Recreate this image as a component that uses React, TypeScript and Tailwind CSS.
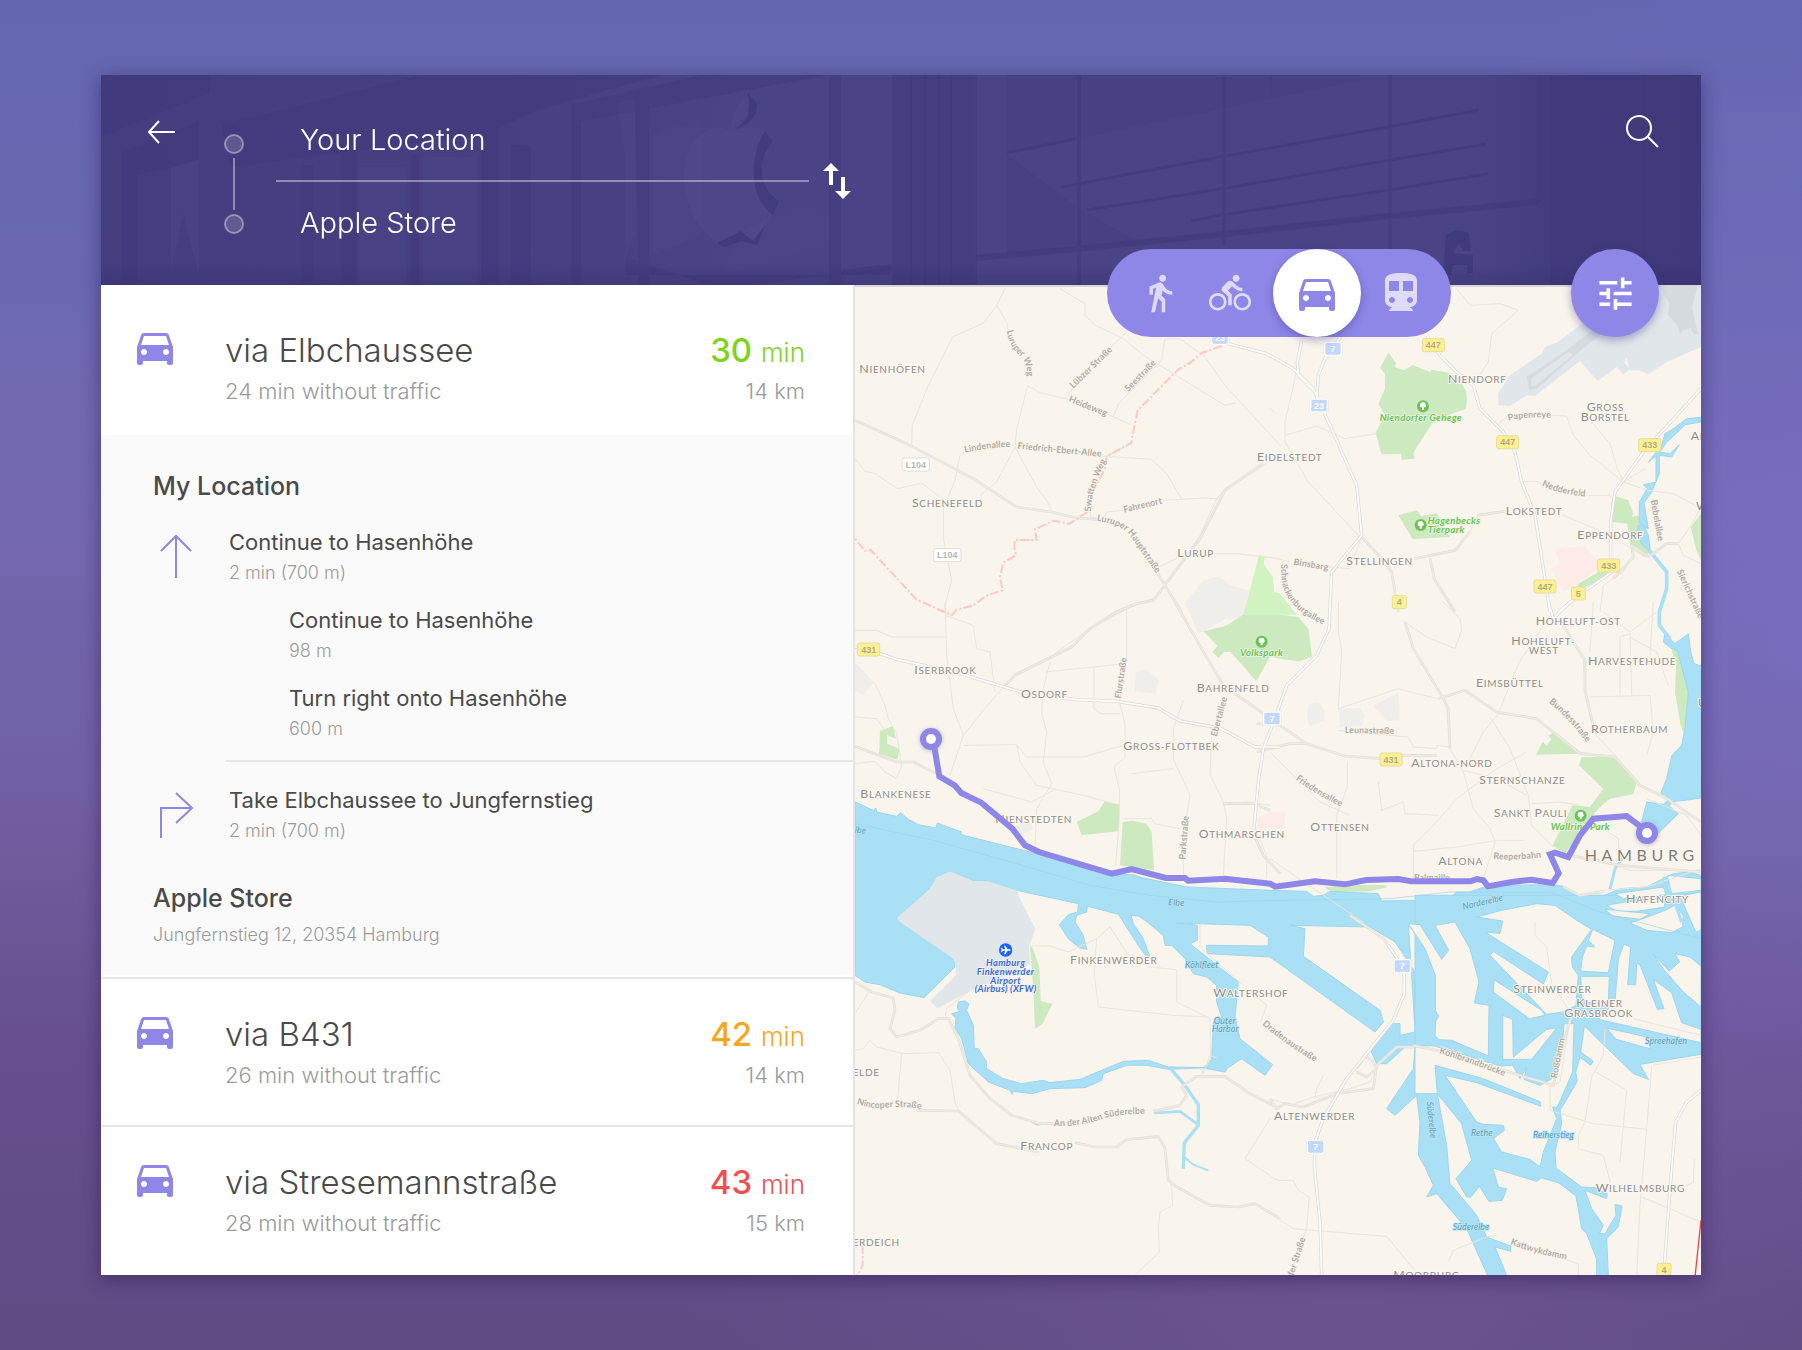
import { useState, type ReactNode } from "react";
import { MdDirectionsBike, MdDirectionsWalk, MdSwapVert, MdTune } from "react-icons/md";

/* ---------- Map data: six tiles on one canvas, three units per pixel ---------- */

type TileId = "a" | "b" | "c" | "d" | "e" | "f";
const tiles: Record<TileId, string> = {
  a: "translate(0 0)",
  b: "translate(1260 0)",
  c: "translate(0 960)",
  d: "translate(1260 960)",
  e: "translate(0 1920)",
  f: "translate(1260 1920)",
};
type Shape = [TileId, string];
type PathName = [TileId, string, string];
type Label = [TileId, number, number, string];

const parks: Shape[] = [
  ["a", "M1228 820L1245 824L1240 845L1268 885L1272 930L1290 935V990H1185Z"],
  ["b", "M355 212L378 243L374 255L402 265L428 250L480 270L485 263L535 272L560 285L588 325L591 352L588 380L545 395L490 420L440 495L430 515L434 530L394 533V515L334 517L317 452L345 400L325 365L345 320L345 275L330 258Z"],
  ["b", "M385 700L440 685L455 703L500 693L540 765L428 771Z"],
  ["b", "M1035 643L1075 655L1090 695L1085 705L1118 697L1105 735L1115 760L1140 810L1125 825L1080 790L1072 725L1027 720L1024 665Z"],
  ["b", "M920 908L985 870L1020 860L1010 885L935 920Z"],
  ["b", "M1293 695L1262 735L1278 800L1293 838Z"],
  ["c", "M1060 88L1125 73L1180 38L1290 38L1345 45L1375 80L1386 165L1345 178L1300 172L1260 165L1219 238L1142 150H1122L1105 168L1087 150L1103 132Z"],
  ["c", "M90 388L128 372L138 410L110 398L112 425L150 442L142 473L87 455Z"],
  ["c", "M680 660L745 628L765 598L809 608L806 688L695 699Z"],
  ["c", "M818 660L848 656L890 665L905 690L912 805L810 790Z"],
  ["d", "M853 390L928 455L797 458L818 420L830 430L845 412L835 402Z"],
  ["d", "M935 465H1030L1100 540L1090 577L1020 590L995 610L960 650L885 755L848 730L908 610L960 615L1000 560L927 490Z"],
  ["d", "M168 855L280 848L350 850V856L300 868L200 870L168 862Z"],
  ["d", "M1205 145L1222 140L1255 270L1243 400L1232 370L1215 270L1218 185Z"],
  ["e", "M540 75L547 75L568 135L572 237L607 246L578 305L555 320L550 200Z"],
];
const brightParks: Shape[] = [
  ["a", "M1228 820L1245 824L1240 845L1268 885L1272 930L1290 935L1340 998H1180Z"],
];
const greys: Shape[] = [
  ["a", "M1060 895L1110 883L1140 910L1197 925L1182 1005L1130 1010L1045 1055L1005 962Z"],
  ["c", "M15 185L70 243L38 280L15 265Z"],
  ["c", "M858 210L885 200L926 230L918 275L853 268Z"],
  ["c", "M470 690L535 650L550 680L505 705Z"],
  ["d", "M115 310L140 300L163 325V355L120 372L110 345Z"],
  ["d", "M205 320L270 318L285 345L275 372L210 375Z"],
  ["d", "M310 312L385 270L389 355L350 357Z"],
];
const pinks: Shape[] = [
  ["b", "M855 800L945 792L990 850L965 875L880 930L845 860L870 845Z"],
  ["d", "M0 630L45 632V680H-35L-42 650Z"],
];
const airfields: Shape[] = [
  ["b", "M1293 15V195L1190 240L1135 277L1105 265H1080L1070 228L1063 240L1080 262L1060 277L1040 255L983 297L930 237L795 342L770 340L720 372L686 370L684 335L720 280L815 215L825 195L865 180L935 125L1030 60L1130 15Z"],
];
const airstrips: Shape[] = [
  ["b", "M1170 15H1283L1266 75L1284 157L1270 155L1262 138L1240 145L1230 157L1222 130L1195 100L1198 65Z"],
  ["b", "M770 285L890 205L1010 110L1030 125L920 215L800 320L778 325ZM785 288L782 312L795 312L910 218L895 210Z"],
];

const water: Shape[] = [
  [
    "c",
    "M15 600L70 625L78 618L80 630L140 643L152 632L175 652L205 668L258 678L262 663L335 690L330 697L540 750L780 818L850 818L880 828L1010 855L1290 866L1370 868L1390 883L1420 880L1440 868L1585 875L1595 897L1770 893L1780 880L1805 882L1820 870L1860 870L1915 850L2105 848L2140 853L2185 880L2265 880L2310 860L2390 855L2470 815L2515 810L2553 820V1100H1760L1755 1120L1725 1040L1675 965L1695 1280L1695 1475L1762 1475L1790 1630L1800 1750L1805 1750L1880 1840L1910 1905L1982 1932V1948L1935 1935L1972 2025H1915L1850 1880L1760 1775L1730 1785L1750 1750L1725 1695L1705 1660L1710 1560L1700 1480L1635 1540L1610 1520L1690 1400L1695 1330L1665 1335L1610 1385L1580 1385L1560 1340L1625 1265H1650V1300L1695 1290L1695 1110L1635 1020L1560 975L1320 970L1365 980L1360 1063L1590 1225L1600 1260L1575 1290L1260 1065L1072 1055L1070 1030L1255 1032V1005L1200 970L980 963L1042 970V1015L1020 1025L1120 1105L1165 1140L1155 1245L1170 1310L1268 1388L1245 1420L1175 1370L1130 1400L1125 1410L1060 1398L1085 1370L1090 1260L1115 1245L1100 1200V1150L1070 1125L1030 1115L1005 1070L965 1030L945 1030L940 1000L885 955L865 942L843 940L850 965L880 1010L900 1065H890L865 1030L820 960L805 937L712 912L710 930L680 940L675 960L700 1000L710 1042L690 1038L655 1010L628 968L655 938L683 930L685 905L500 865L415 838L370 837L300 808L260 825L238 862L140 948L312 1070L315 1095L222 1187L150 1173L90 1148L45 1140L15 1120Z",
  ],
  [
    "f",
    "M435 -80H1293V397L1110 427L1135 472L1090 455L943 312L932 390L970 418L962 430L930 405L917 450L922 478L870 565L875 605L855 690L858 738L935 795L975 797L1012 815L1010 830L945 805L965 860L1000 910L988 935H1005L1038 880L1035 848L1056 852L1045 915L1010 950L1015 1065H980V1010L950 935L935 920L918 822L865 782L815 768L800 778L668 738L685 795L710 800L697 835L657 838L628 792L603 825H590L558 770L605 715L575 605L502 515L495 430L640 470L812 540V553L620 482L525 460L620 600L640 607L700 610L703 625L670 650L695 690L780 712L810 735L820 690L860 590L848 555L862 555L908 450L912 305H882L875 400L845 470L810 490L762 472L770 435L750 470L728 430L690 432L495 372L435 370Z",
  ],
  ["d", "M1255 95L1262 150L1272 185L1293 192V588L1245 595L1195 600L1173 572L1190 530L1205 462L1235 430L1245 380L1255 270L1222 145L1205 140L1180 120L1185 95L1215 125Z"],
  ["d", "M1130 600L1180 607L1195 595L1205 602L1197 612L1225 635L1150 708L1115 660Z"],
  ["b", "M1105 730L1120 725L1135 760L1142 812L1118 790L1103 762Z"],
  ["b", "M1293 406L1250 410L1210 440L1185 455L1175 490L1135 540L1158 522V600L1120 608L1132 620L1108 660V725L1135 740L1122 662L1145 630L1168 575V520L1205 525L1228 488L1200 515L1170 510L1190 480L1215 458L1245 428L1293 420Z"],
  ["e", "M325 240L345 237L357 245L350 265L370 310L373 380L385 380L410 420V440L460 470L515 485L580 475L600 482L690 472L820 418L895 415L955 435L1075 437L955 442L890 430L830 430L760 455L755 475L705 497L600 500L545 515L490 508L487 517L480 505L415 480L355 425L335 350L315 318L318 290L305 275L330 268L322 260Z"],
  ["e", "M545 600L558 600L572 608L560 609Z"],
];
const islands: Shape[] = [
  ["f", "M415 5L450 8L515 112L536 85L495 10L555 0L600 80L627 180L613 243L657 250L655 402L545 355L508 353L495 342L497 298L506 283L496 265V160L465 80Z"],
  ["f", "M620 -15L695 -35L800 -55L855 -50L920 -5L965 22L905 105L907 135L925 160L918 250L880 270L830 277L660 100L670 88L820 186L835 150L645 30L690 34L698 -3Z"],
  ["f", "M672 173L815 265L825 280L778 290L670 210Z"],
  ["f", "M698 280L728 292L730 405L830 322L860 318L785 412H698Z"],
  ["f", "M968 22L1035 55L1015 152L932 148L937 105L950 72L975 75L955 55Z"],
  ["f", "M932 163H1018L1015 238L950 242L935 225Z"],
  ["f", "M1062 66L1082 75L1073 188H1097L1100 122L1110 128L1162 262L1182 260L1150 172L1205 212L1235 302L1293 322V362L985 292L1035 238L1045 110Z"],
  ["f", "M1150 97L1198 147L1228 120L1215 95L1260 105L1293 133V255L1240 210L1175 135Z"],
  ["f", "M1010 318L1145 348L1140 380L1038 352Z"],
  ["f", "M1080 3L1125 -12L1185 -35L1215 -50L1240 -20L1238 15L1205 32L1130 25Z"],
  ["f", "M1010 -50L1065 -60L1180 -70L1185 -45L1100 -32H1040Z"],
  ["f", "M1005 -38L1140 -25L1110 -8L1028 -18Z"],
  ["f", "M1192 -140L1293 -130V-95L1205 -85Z"],
  ["f", "M1230 -78L1293 -90V25L1278 30L1255 -20Z"],
  ["f", "M1035 -85L1180 -105L1188 -82L1060 -70Z"],
];
const rivers: [TileId, string, number][] = [
  ["b", "M1138 805L1190 870V920L1168 990L1168 1030L1200 1070", 11],
  ["d", "M1060 765L1035 800L1020 862", 9],
  ["d", "M1180 825L1210 890L1235 960", 9],
  ["e", "M962 440L1003 488L1045 548V610L1003 663L1000 740", 10],
  ["e", "M1003 705L1030 728L1075 745", 6],
  ["e", "M912 573L990 568L1040 605", 8],
];

const lanes: Shape[] = [
  ["a", "M465 20L440 70L402 122L308 165L235 310L187 430L185 490"],
  ["a", "M440 70L472 125L475 165M533 312L500 440L495 495L440 600L390 640M533 312L570 332L645 350L700 275L830 150"],
  ["a", "M645 350L750 385L845 430M790 405L805 365L935 235L945 170"],
  ["a", "M630 20L705 65V100L735 130L820 170L880 220L1125 370L1158 362"],
  ["a", "M945 170H990L1065 225L1125 310L1290 490M495 495L560 615L590 655L605 685"],
  ["a", "M345 510L330 520L315 595L280 680V770L305 895L280 990M15 530L45 568L75 575L143 620L215 603L290 660"],
  ["a", "M755 522L905 532L950 575L995 652M945 655L1060 648L1105 650M722 705L720 640M722 705L760 715L770 690L820 685"],
  ["a", "M770 522L850 482M925 855L1000 820M1090 815H1160L1290 830"],
  ["a", "M1255 540L1180 590L1130 615L1100 650L1050 760L1005 830L910 950L860 965L795 990"],
  ["b", "M540 20L410 38M560 20L600 70L690 65L745 85L665 155L655 240L625 285M90 175L75 290L45 420V480L115 600L265 760L360 850L385 990"],
  ["b", "M45 460L140 432L225 470L320 455M0 380L15 390M680 430L715 400M845 400L890 402L910 460L960 520L1060 600L1135 625L1210 635L1293 680"],
  ["b", "M960 415L1020 485L1045 570M1045 565L1060 600L1125 560M755 598H800L870 630M930 640H1020L1025 650M880 700L1020 760L1125 825"],
  ["b", "M705 685L625 698L600 750L560 805L435 830M480 830L490 890L555 990M0 825L60 840M175 855L240 860L275 765M205 855L190 860"],
  ["b", "M1293 680L1250 750L1225 785L1240 820L1293 845M1080 830L1060 870L1000 910L990 990"],
  ["c", "M285 0L290 160L310 320L340 400L300 520M340 400L400 325L465 250L495 215L600 165L720 80L860 5"],
  ["c", "M830 20V180L808 300L825 365V465L792 495L808 560V650L797 790M600 180L580 260L575 330L590 390L580 480L605 545L560 620L555 740"],
  ["c", "M585 210L730 195L825 185M732 195V320L755 335L810 335M15 345L80 350L105 385M15 185L75 245L105 310L115 350L140 395L155 490L140 530L105 510L75 478L15 485"],
  ["c", "M1000 295L970 380V470L1020 580L1000 700V830M1085 405L1080 520L1120 600L1130 650L1120 820M340 430L500 428L530 465H700L820 430"],
  ["c", "M500 430L510 480L560 550L700 580L790 605M400 560L545 600L620 560M815 650H905L915 665L990 680M845 515L970 500"],
  ["c", "M975 0L1020 80L1090 200L1120 250L1240 335M1260 610L1190 600L1120 610M1215 680L1250 760V830"],
  ["c", "M15 85L80 85L125 105H210L285 105M285 40L370 70L380 140L420 150L435 270"],
  ["d", "M205 0V90L215 150L205 320L385 260L440 275L505 290M405 60L430 140L520 290L530 320L540 440L580 510L610 620L660 680L675 720L640 830"],
  ["d", "M405 60L470 105L555 140L575 85L570 50L520 0M505 290L580 265L685 335L800 350L930 450L1030 465L1105 545L1190 585"],
  ["d", "M835 50L745 185L685 335L640 390L600 470M660 345L720 440L775 580L785 670L850 735M870 55L940 170L945 260L970 390L1040 465"],
  ["d", "M1080 95L1050 105L1050 280M1000 30L1080 90L1160 30M960 285L1140 280L1150 390L1130 460M1080 95L1085 280M1080 105L1160 150L1195 250"],
  ["d", "M205 385L415 405L430 435L500 440V430L540 435M232 480V555L200 640V830M325 540L335 625L400 600L405 635L505 640"],
  ["d", "M430 830V730L500 660L560 590L680 500L770 450M430 748L560 735L680 715H760M580 505L680 530L770 580M785 605L870 600L930 610"],
  ["d", "M0 770L160 880L280 960M0 440L70 425H110L225 465M0 450L150 600L240 640M1000 680L1045 710L1048 760"],
  ["d", "M865 760L980 770L1080 805H1293M930 880L1000 865L1130 855L1293 800M1130 590L1250 640L1293 700M960 150L970 0M1150 0L1140 160"],
  ["e", "M15 275L60 205M15 385L40 380L60 355L80 375L160 395L265 392L300 445L315 540L325 565M155 395L142 540M540 72H600L655 90L740 50L780 15L835 100"],
  ["e", "M740 50L732 150L745 255L970 280L1075 285M895 135L980 143V240L1080 290L1082 410L1055 455M360 205L290 260L285 285"],
  ["e", "M1050 5V75L1180 190L1250 250L1232 300M925 645L945 680L955 770L965 795L968 850L930 870L925 920L928 990L850 1065"],
  ["e", "M1260 590L1185 710L1260 760M1060 455L1080 400L1100 408"],
  ["f", "M0 530L60 550L130 525L240 500L300 480L325 430L385 375L430 378M160 460L140 500L135 530M0 765L25 775H70L85 805L118 825L110 920L60 1060"],
  ["f", "M0 875L70 920L350 943L380 980L430 1040M535 1020L550 985L650 945L680 940M890 1015L925 1025V1065"],
  ["f", "M795 0V40L830 75L845 185L890 255L900 270M900 290L870 480L840 495V565L970 605L1130 622"],
  ["f", "M1145 435L1130 620L1110 850L1100 1065M1145 430L1293 405M1090 290L1293 340M1005 320L1000 400L965 465L945 600L925 640V680L1000 700L1020 780"],
  ["f", "M970 445L1070 505L1050 720M1115 825L1175 850L1293 900M1273 710L1270 780L1190 820"],
];
const avenues: Shape[] = [
  ["a", "M15 415L180 490L370 590L500 675L605 690L680 708L740 712M920 870L945 910L995 990M1240 545L1180 585L1125 625L1050 770L1000 835L910 955L860 965L800 990"],
  ["c", "M975 0L1020 80L1090 200L1120 250L1240 335M15 433L140 480L190 480L260 515M860 5L800 30L720 80L665 135L495 220L465 250"],
  ["b", "M275 765L335 830L365 870L385 990M620 700L705 688M435 830L555 805L600 750M480 830L495 895L555 990M1030 890L1090 825L1085 790L1135 825L1190 785H1225"],
  ["c", "M1212 700L1240 760L1290 815M1120 605L1215 605L1260 625"],
  ["d", "M-40 365L30 370L110 425L225 462L330 470M-40 450L60 425H110M395 460H500M405 60L430 140L520 290L535 320L540 440M505 290L585 265L680 330L800 350L930 455L1035 465L1110 550L1190 590L1293 660"],
  ["d", "M900 760L1050 790L1293 810M880 855L930 880L1000 868M870 55L945 175L945 265L975 395"],
  ["e", "M15 180L65 210L130 228L135 265L120 320L140 345L210 325L265 290H295L325 350L360 460L420 530L485 580L570 605H610M910 568L990 550L1010 520L995 495L1040 463H1125L1200 515L1290 560M200 565L325 567L385 618L440 665L565 690M675 662L735 675H800L830 653L925 643L945 680L955 775L980 795L1080 850L1165 855L1215 845L1290 890"],
  ["f", "M260 440L285 400L310 420L320 440L290 465L260 450M430 370L500 385L850 490L890 330L905 280M0 530L20 560L45 545L100 555L200 515L310 500L320 430L380 375H430M240 -20L340 50L370 90"],
];
const highways: Shape[] = [
  ["a", "M1115 180L1250 215L1330 260L1390 320L1440 430L1520 610L1535 760L1445 870L1437 1040L1400 1120L1310 1210L1275 1310L1240 1400L1225 1500L1212 1640"],
  ["b", "M215 160L165 230L145 280L140 350M95 175L82 240L85 280L130 325M470 160L510 220L560 270L610 310L630 380L700 450L735 510L755 600L795 700L820 860L840 990M1293 320L1120 510L1035 630L1022 720V850"],
  ["b", "M1025 870L940 930L865 990"],
  ["c", "M15 135L90 155L140 172L320 212L520 272L680 293L800 298L925 318L990 357L1110 378L1215 435H1290"],
  ["d", "M835 0L850 50L900 0"],
  ["f", "M355 70L385 115L402 150L403 215L370 295L230 470L160 590L135 660L133 730L150 900L155 1065"],
  ["f", "M1293 505L1250 540L1217 600L1205 740L1195 870L1183 1030"],
];
const borders: Shape[] = [
  ["a", "M1115 192L1055 213L1020 243L985 262L863 385L843 483L770 523L765 560L722 640L723 683L658 725L610 716L555 742L560 774H495L493 795L498 820L460 842L450 885L458 925L412 940L370 970L320 983L305 1000L200 953L60 802L45 807L15 770"],
  ["e", "M38 970V1030L20 1065"],
];

const districts: Label[] = [
  ["a", 28, 273, "Nienhöfen"],
  ["a", 186, 674, "Schenefeld"],
  ["a", 982, 825, "Lurup"],
  ["a", 1221, 537, "Eidelstedt"],
  ["b", 534, 303, "Niendorf"],
  ["b", 950, 388, "Gross"],
  ["b", 932, 416, "Borstel"],
  ["b", 707, 698, "Lokstedt"],
  ["b", 922, 771, "Eppendorf"],
  ["b", 229, 848, "Stellingen"],
  ["b", 1262, 473, "Alsterdorf"],
  ["b", 1278, 684, "Winterhude"],
  ["c", 193, 215, "Iserbrook"],
  ["c", 513, 287, "Osdorf"],
  ["c", 1040, 271, "Bahrenfeld"],
  ["c", 820, 445, "Gross-flottbek"],
  ["c", 31, 589, "Blankenese"],
  ["c", 436, 662, "Nienstedten"],
  ["c", 1046, 708, "Othmarschen"],
  ["d", 797, 69, "Hoheluft-ost"],
  ["d", 724, 128, "Hoheluft-"],
  ["d", 954, 189, "Harvestehude"],
  ["d", 618, 254, "Eimsbüttel"],
  ["d", 963, 393, "Rotherbaum"],
  ["d", 424, 496, "Altona-nord"],
  ["d", 628, 547, "Sternschanze"],
  ["d", 671, 645, "Sankt Pauli"],
  ["d", 121, 687, "Ottensen"],
  ["d", 505, 789, "Altona"],
  ["d", 1068, 904, "Hafencity"],
  ["d", 1284, 316, "Uhlenhorst"],
  ["e", 660, 126, "Finkenwerder"],
  ["e", 1090, 224, "Waltershof"],
  ["e", 511, 684, "Francop"],
  ["f", 730, 212, "Steinwerder"],
  ["f", 919, 256, "Kleiner"],
  ["f", 883, 286, "Grasbrook"],
  ["f", 12, 595, "Altenwerder"],
  ["f", 977, 811, "Wilhelmsburg"],
  ["f", 370, 1070, "Moorburg"],
];
const capsOnly: Label[] = [
  ["d", 776, 157, "WEST"],
  ["e", 8, 463, "ELDE"],
  ["e", 8, 973, "ERDEICH"],
];
const streets: PathName[] = [
  ["a", "M470 146Q480 200 512 222Q535 245 532 310", "Luruper Weg"],
  ["a", "M670 320L805 188", "Lübzer Straße"],
  ["a", "M835 330L935 228", "Seestraße"],
  ["a", "M655 358L795 414", "Heideweg"],
  ["a", "M345 512Q420 495 500 494", "Lindenallee"],
  ["a", "M502 500L790 528", "Friedrich-Ebert-Allee"],
  ["a", "M723 688Q722 620 780 515", "Swatten Weg"],
  ["a", "M823 692L955 660", "Fahrenort"],
  ["a", "M740 716Q830 730 850 775L940 905", "Luruper Hauptstraße"],
  ["b", "M716 416Q780 400 865 410", "Papenreye"],
  ["b", "M815 610Q870 640 970 645", "Nedderfeld"],
  ["b", "M1142 655L1168 800", "Bebelallee"],
  ["b", "M70 848L195 868", "Binsbarg"],
  ["b", "M34 846Q30 920 60 955Q100 1010 190 1038", "Schnackenburgallee"],
  ["b", "M1220 868L1300 1040", "Sierichstraße"],
  ["c", "M812 290L833 150", "Flurstraße"],
  ["c", "M1100 405L1135 275", "Ebertallee"],
  ["c", "M1006 773L1017 630", "Parkstraße"],
  ["d", "M224 393L390 396", "Leunastraße"],
  ["d", "M836 302Q895 345 960 435", "Bundesstraße"],
  ["d", "M77 532Q140 580 235 625", "Friedensallee"],
  ["d", "M670 770Q740 778 840 762", "Reeperbahn"],
  ["d", "M432 837L570 837", "Palmaille"],
  ["e", "M20 545Q60 562 110 557Q170 550 240 567", "Nincoper Straße"],
  ["e", "M611 612Q690 615 760 590Q820 572 920 576", "An der Alten Süderelbe"],
  ["e", "M1236 308Q1310 370 1415 432", "Dradenaustraße"],
  ["f", "M507 394Q600 420 730 474", "Köhlbrandbrücke"],
  ["f", "M860 470L889 325", "Roßdamm"],
  ["f", "M720 966Q790 995 910 1016", "Kattwykdamm"],
  ["f", "M70 1062L110 938", "fer Straße"],
];
const waterNames: PathName[] = [
  ["c", "M14 692L70 697", "lbe"],
  ["c", "M955 910L1030 912", "Elbe"],
  ["d", "M580 923L740 886", "Norderelbe"],
  ["e", "M1005 139H1140", "Köhlfleet"],
  ["e", "M1091 305H1190", "Outer"],
  ["e", "M1086 330H1190", "Harbor"],
  ["f", "M470 540L485 690", "Süderelbe"],
  ["f", "M603 642H700", "Rethe"],
  ["f", "M789 647H960", "Reiherstieg"],
  ["f", "M548 923H710", "Süderelbe"],
  ["f", "M1125 366H1290", "Spreehafen"],
];
const parkNames: Label[] = [
  ["b", 329, 416, "Niendorfer Gehege"],
  ["b", 473, 725, "Hagenbecks"],
  ["b", 473, 752, "Tierpark"],
  ["c", 1170, 162, "Volkspark"],
  ["d", 842, 683, "Wallring Park"],
];
const parkPins: [TileId, number, number][] = [
  ["b", 459, 373],
  ["b", 452, 729],
  ["c", 1235, 119],
  ["d", 932, 641],
];
const shields: [TileId, number, number, string, "white" | "yellow" | "blue"][] = [
  ["a", 197, 548, "L104", "white"],
  ["a", 292, 820, "L104", "white"],
  ["a", 1110, 168, "23", "blue"],
  ["b", 189, 201, "7", "blue"],
  ["b", 147, 371, "23", "blue"],
  ["b", 490, 190, "447", "yellow"],
  ["b", 713, 481, "447", "yellow"],
  ["b", 1139, 490, "433", "yellow"],
  ["b", 1016, 851, "433", "yellow"],
  ["b", 825, 914, "447", "yellow"],
  ["b", 925, 935, "5", "yellow"],
  ["b", 388, 961, "4", "yellow"],
  ["c", 56, 143, "431", "yellow"],
  ["c", 1266, 350, "7", "blue"],
  ["d", 363, 473, "431", "yellow"],
  ["f", 397, 133, "7", "blue"],
  ["f", 137, 675, "7", "blue"],
  ["f", 1182, 1044, "4", "yellow"],
];

function Layer({ shapes, className, width }: { shapes: Shape[]; className: string; width?: number }) {
  return (
    <g className={className} strokeWidth={width} strokeLinejoin="round">
      {shapes.map(([tile, d], i) => (
        <path key={i} transform={tiles[tile]} d={d} />
      ))}
    </g>
  );
}

function CurvedNames({ names, prefix, className }: { names: PathName[]; prefix: string; className: string }) {
  return (
    <g className={className} strokeWidth="5" paintOrder="stroke" strokeLinejoin="round">
      {names.map(([tile, d, name], i) => (
        <g key={i} transform={tiles[tile]}>
          <path id={`${prefix}-${i}`} d={d} fill="none" stroke="none" />
          <text>
            <textPath href={`#${prefix}-${i}`}>{name}</textPath>
          </text>
        </g>
      ))}
    </g>
  );
}

function RoadShield({ label, kind }: { label: string; kind: "white" | "yellow" | "blue" }) {
  const w = label.length === 4 ? 82 : label.length === 3 ? 66 : kind === "blue" ? 50 : 42;
  const box =
    kind === "white"
      ? "fill-white stroke-[#dfddd8]"
      : kind === "yellow"
        ? "fill-[#fdf094] stroke-[#e6dc9c]"
        : "fill-[#c3d8fb] stroke-white";
  const text = kind === "white" ? "fill-[#b9b7b2]" : kind === "yellow" ? "fill-[#b3ab7d]" : "fill-white";
  return (
    <g>
      {kind === "blue" && <rect x={-w / 2 - 3} y="-22" width={w + 6} height="43" rx="8" className="fill-[#dddcdc]" />}
      <rect x={-w / 2} y="-20" width={w} height="39" rx="6" strokeWidth={kind === "blue" ? 4 : 3} className={box} />
      <text y="9" textAnchor="middle" className={`${text} font-['Liberation_Sans'] text-[27px] font-bold`}>
        {label}
      </text>
    </g>
  );
}

function DistrictName({ name }: { name: string }) {
  return (
    <>
      {name.split(" ").map((word, i) => (
        <tspan key={i}>
          {i > 0 ? " " : ""}
          {word[0]}
          <tspan className="text-[30px]">{word.slice(1).toUpperCase()}</tspan>
        </tspan>
      ))}
    </>
  );
}

function RouteMap() {
  return (
    <svg
      viewBox="15 15 2538 2970"
      preserveAspectRatio="xMinYMin slice"
      className="block size-full bg-[#f9f4ec] font-[Lato,sans-serif]"
      role="img"
      aria-label="Map of Hamburg with the route along the Elbchaussee"
    >
      <defs>
        <filter id="pin-shadow" x="-50%" y="-50%" width="200%" height="200%">
          <feDropShadow dx="0" dy="2" stdDeviation="7" floodColor="#6d6a90" floodOpacity="0.45" />
        </filter>
      </defs>

      <Layer shapes={greys} className="fill-[#f0eeea]" />
      <Layer shapes={pinks} className="fill-[#fdebe8]" />
      <Layer shapes={airfields} className="fill-[#e0e6ea]" />
      <Layer shapes={airstrips} className="fill-[#d5dbdf]" />
      <Layer shapes={parks} className="fill-[#cde9bf]" />
      <Layer shapes={brightParks} className="fill-[#d1f2c1]" />
      <Layer shapes={water} width={3} className="fill-[#a9e0f5] stroke-[#9dd6ee]" />
      <Layer shapes={islands} width={3} className="fill-[#f9f4ec] stroke-[#9dd6ee]" />
      <g className="fill-none stroke-[#a9e0f5]" strokeLinejoin="round">
        {rivers.map(([tile, d, w], i) => (
          <path key={i} transform={tiles[tile]} d={d} strokeWidth={w} />
        ))}
      </g>
      <path
        transform={tiles.c}
        className="fill-[#e0e6ea]"
        d="M140 948L238 862L260 825L300 808L370 837L415 838L500 865L515 900L556 980L537 1035L540 1085L365 1165L262 1219L240 1198L318 1120V1090L310 1070L150 960Z"
      />
      <path
        className="fill-none stroke-[#9dd3ea]"
        strokeWidth="2"
        transform={tiles.c}
        d="M15 665L250 715L500 785L720 850L900 880L1100 900L1290 895M1290 895L1620 890L1800 870L2100 870L2250 930L2553 1010"
      />

      <Layer shapes={lanes} width={3} className="fill-none stroke-[#e9e6de]" />
      <Layer shapes={avenues} width={8} className="fill-none stroke-[#e1dfd8]" />
      <Layer shapes={avenues} width={4} className="fill-none stroke-[#eeebe3]" />
      <Layer shapes={highways} width={10} className="fill-none stroke-[#dddbd5]" />
      <Layer shapes={highways} width={5} className="fill-none stroke-white" />
      <g strokeDasharray="26 7 6 7">
        <Layer shapes={borders} width={6} className="fill-none stroke-[#fcc8c6]" />
      </g>
      <path transform={tiles.f} d="M1293 895L1275 1065" strokeWidth="4" className="stroke-[#f4414b]" />

      <CurvedNames names={streets} prefix="street" className="fill-[#aeaba5] stroke-[#f9f4ec] text-[27px] font-bold" />
      <CurvedNames names={waterNames} prefix="water" className="fill-[#5a9dbb] stroke-[#b9e3f3] text-[27px] italic" />

      <g className="fill-[#8f8c88] stroke-[#fbf8f2] text-[37px] tracking-[2px]" strokeWidth="6" paintOrder="stroke" strokeLinejoin="round">
        {districts.map(([tile, x, y, name]) => (
          <g key={name} transform={tiles[tile]}>
            <text x={x} y={y}>
              <DistrictName name={name} />
            </text>
          </g>
        ))}
        {capsOnly.map(([tile, x, y, name]) => (
          <g key={name} transform={tiles[tile]} className="text-[30px]">
            <text x={x} y={y}>
              {name}
            </text>
          </g>
        ))}
        <text x="2204" y="1738" className="fill-[#7f7c78] text-[48px] tracking-[14px]">
          HAMBURG
        </text>
      </g>

      <g className="fill-[#6cc259] stroke-[#ecf6e2] text-[29px] font-bold tracking-[1px] italic" strokeWidth="5" paintOrder="stroke" strokeLinejoin="round">
        {parkNames.map(([tile, x, y, name]) => (
          <g key={name} transform={tiles[tile]}>
            <text x={x} y={y}>
              {name}
            </text>
          </g>
        ))}
      </g>
      {parkPins.map(([tile, x, y], i) => (
        <g key={i} transform={tiles[tile]}>
          <g transform={`translate(${x} ${y})`}>
            <circle r="18" className="fill-[#6cc259]" />
            <path d="M-3 11V3H-6A5 5 0 0 1 -8 -5A8 7 0 0 1 8 -5A5 5 0 0 1 6 3H3V11Z" className="fill-white" />
          </g>
        </g>
      ))}

      <g transform={tiles.e}>
        <circle cx="467" cy="84" r="20" className="fill-[#1f63f5]" />
        <path
          d="M455 84L452 77H455L459 82H466L462 71H466L473 82H480A2 2 0 0 1 480 86H473L466 97H462L466 86H459L455 91H452Z"
          className="fill-white"
        />
        <g className="fill-[#3c6ad8] stroke-[#f1f3f7] text-[28px] font-bold tracking-[1px] italic" strokeWidth="5" paintOrder="stroke" textAnchor="middle" strokeLinejoin="round">
          <text x="467" y="132">Hamburg</text>
          <text x="467" y="158">Finkenwerder</text>
          <text x="467" y="185">Airport</text>
          <text x="467" y="211">(Airbus) (XFW)</text>
        </g>
      </g>

      {shields.map(([tile, x, y, label, kind], i) => (
        <g key={i} transform={tiles[tile]}>
          <g transform={`translate(${x} ${y})`}>
            <RoadShield label={label} kind={kind} />
          </g>
        </g>
      ))}

      <g filter="url(#pin-shadow)">
        <circle cx="243" cy="1371" r="33" className="fill-[#8e87e8]" />
        <circle cx="2391" cy="1653" r="33" className="fill-[#8e87e8]" />
      </g>
      <path
        transform={tiles.c}
        className="fill-none stroke-[#8e87e8]"
        strokeWidth="18"
        d="M252 430L268 523L314 550L334 573L394 602L487 680L525 730L567 750L785 815L845 801L948 828H1005L1014 836L1125 830L1260 845L1276 854L1395 838L1485 847L1548 834L1645 831L1685 838H1862L1880 831L1900 835L1914 853L1985 840L2045 833L2108 843L2126 814L2100 757L2115 752L2155 765L2190 700L2230 650L2330 642L2380 680"
      />
      <circle cx="243" cy="1371" r="15" className="fill-white" />
      <circle cx="2391" cy="1653" r="15" className="fill-white" />
    </svg>
  );
}

/* ---------- Icons ---------- */

function CarIcon({ className = "" }: { className?: string }) {
  return (
    <svg viewBox="0 0 24 24" className={`size-12 fill-current ${className}`} aria-hidden="true">
      <path d="M18.92 6.01C18.72 5.42 18.16 5 17.5 5h-11c-.66 0-1.21.42-1.42 1.01L3 12v8c0 .55.45 1 1 1h1c.55 0 1-.45 1-1v-1h12v1c0 .55.45 1 1 1h1c.55 0 1-.45 1-1v-8l-2.08-5.99zM6.5 16c-.83 0-1.5-.67-1.5-1.5S5.67 13 6.5 13s1.5.67 1.5 1.500S7.330 16 6.500 16zm11 0c-.83 0-1.500-.67-1.500-1.500s.67-1.500 1.500-1.500 1.500.67 1.500 1.500-.67 1.500-1.500 1.500zM5 11l1.500-4.500h11L19 11H5z" />
    </svg>
  );
}

function TrainIcon() {
  return (
    <svg viewBox="0 0 24 24" className="size-12 fill-current" aria-hidden="true">
      <path d="M12 2c-4.420 0-8 .5-8 4v9.500C4 17.430 5.570 19 7.500 19L6 20.500v.5h12v-.5L16.500 19c1.930 0 3.500-1.570 3.500-3.500V6c0-3.500-3.580-4-8-4zM7.500 17c-.83 0-1.500-.67-1.500-1.500S6.670 14 7.500 14s1.500.67 1.500 1.500S8.330 17 7.500 17zm3.500-6H6V6h5v5zm5.500 6c-.83 0-1.500-.67-1.500-1.500s.67-1.500 1.500-1.500 1.500.67 1.500 1.500-.67 1.500-1.500 1.500zm1.500-6h-5V6h5v5z" />
    </svg>
  );
}

/* ---------- Header ---------- */

function StoreBackdrop() {
  return (
    <svg viewBox="0 0 1600 210" preserveAspectRatio="xMidYMid slice" className="absolute inset-0 size-full" aria-hidden="true">
      <defs>
        <linearGradient id="store-wall" x1="0" x2="1" y1="0" y2="0">
          <stop offset="0" stopColor="#443e7f" />
          <stop offset="0.25" stopColor="#463f81" />
          <stop offset="0.4" stopColor="#4a4486" />
          <stop offset="0.86" stopColor="#4a4486" />
          <stop offset="0.9" stopColor="#443e80" />
          <stop offset="1" stopColor="#413b7c" />
        </linearGradient>
        <linearGradient id="store-fade" x1="0" x2="0" y1="0" y2="1">
          <stop offset="0.9" stopColor="#2f2a66" stopOpacity="0" />
          <stop offset="1" stopColor="#2f2a66" stopOpacity="0.3" />
        </linearGradient>
      </defs>
      <rect width="1600" height="210" fill="url(#store-wall)" />
      <g fill="#3f397a" opacity="0.4">
        <path d="M0 0H110L108 18L0 62ZM20 78L98 46V86L36 100V210H20ZM120 50L320 0H560L440 34L380 60L130 92Z" />
        <path d="M380 40H398V210H380ZM240 70H256V210H240ZM470 30H480V210H470ZM534 20L548 18V210H538ZM728 0H740V210H728Z" />
        <path d="M200 90H212V210H200ZM310 80H318V210H310ZM410 70H430V210H410Z" />
        <path d="M470 30L600 0H728L480 46ZM524 182L620 214L790 192V200H524Z" />
        <path d="M906 78L1120 34L1259 5V0H906ZM906 80L976 132L1035 166L906 180Z" opacity="0.6" />
      </g>
      <g fill="#3f397a" opacity="0.55">
        <path d="M791 0H872V210H791Z" />
      </g>
      <g fill="#514b8d" opacity="0.3">
        <path d="M70 92L98 84V200L82 140L70 195ZM258 92H305V210H258ZM322 82H376V210H322ZM516 28L534 24V160L524 182V80ZM552 60L600 44V160L552 180Z" />
        <path d="M640 156L700 130L728 140V170L620 200Z" />
      </g>
      <g fill="#544e90" opacity="0.4">
        <path d="M583 100C586 64 606 48 624 54C640 58 648 46 664 56L672 66C656 84 656 112 676 126C668 148 658 164 646 166C634 160 626 164 616 168C596 152 582 130 583 100Z" />
        <path d="M646 18C650 34 646 46 630 54C630 38 638 28 646 18Z" />
      </g>
      <path
        d="M664 56L672 66C656 84 656 112 678 126L672 140C650 126 646 84 664 56ZM646 18L656 28C656 42 648 50 634 54C648 46 652 34 646 18ZM616 168L640 156L652 166L664 150L656 170L640 166L624 172Z"
        fill="#3b3574"
        opacity="0.6"
      />
      <g fill="none" stroke="#3f3978" opacity="0.55">
        <path strokeWidth="6" d="M874 183L976 174L1123 159L1289 141L1437 127M740 198L791 192" />
        <path strokeWidth="3" d="M960 112L1119 82L1287 52L1378 35M986 135L1120 114L1283 86L1385 69M1090 146L1120 140L1287 115L1387 99M906 78L975 64" />
        <path strokeWidth="2" d="M810 0V210M824 0V210M838 0V210M850 0V210" opacity="0.6" />
        <path strokeWidth="4" d="M874 0V210M978 0V210M1123 0V170M1289 0V210M1439 0V128" opacity="0.7" />
        <path strokeWidth="1" d="M1450 0V210M1543 0V190M1170 0V20" />
      </g>
      <path d="M1345 160Q1356 152 1368 158L1370 176H1362L1358 168L1352 178L1372 180V198H1366V190H1352L1350 200H1342Z" fill="#3b3574" opacity="0.6" />
      <path d="M1586 0H1600V210H1586ZM1450 0H1600V210H1450Z" fill="#3d3777" opacity="0.35" />
      <rect width="1600" height="210" fill="url(#store-fade)" />
    </svg>
  );
}

function TripHeader() {
  return (
    <header className="relative h-[210px] bg-[#463f81] text-white">
      <StoreBackdrop />
      <div className="relative flex items-start justify-between pr-[42px]">
        <div className="grid w-[754px] grid-cols-[106px_80px_1fr_46px]">
          <button type="button" aria-label="Back" className="mt-[35px] ml-[38px] flex size-11 items-center justify-center">
            <svg viewBox="0 0 28 24" className="h-6 w-7 fill-none stroke-white" strokeWidth="2">
              <path d="M28 12H2M12 1L2 12L12 23" />
            </svg>
          </button>
          <svg viewBox="0 0 24 104" className="mt-[57px] ml-[15px] h-[104px] w-6" aria-hidden="true">
            <g className="fill-white/15 stroke-white/40" strokeWidth="2">
              <circle cx="12" cy="12" r="9" />
              <circle cx="12" cy="92" r="9" />
              <path d="M12 26V78" />
            </g>
          </svg>
          <form className="mt-9 -ml-[11px] flex flex-col">
            <input
              aria-label="Start"
              defaultValue="Your Location"
              className="h-[61px] w-full bg-transparent px-6 pb-1 text-[29px] font-light outline-none"
            />
            <hr className="my-2 border-t-2 border-white/40" />
            <input
              aria-label="Destination"
              defaultValue="Apple Store"
              className="h-16 w-full bg-transparent px-6 text-[29px] font-light outline-none"
            />
          </form>
          <button type="button" aria-label="Swap start and destination" className="mt-[82px] ml-1 size-12">
            <MdSwapVert size={48} />
          </button>
        </div>
        <button type="button" aria-label="Search" className="mt-[34px] flex size-11 items-center justify-end">
          <svg viewBox="0 0 34 34" className="size-[34px] fill-none stroke-white" strokeWidth="2">
            <circle cx="14" cy="14" r="12" />
            <path d="M23 23L33 33" />
          </svg>
        </button>
      </div>
    </header>
  );
}

/* ---------- Routes ---------- */

type RouteInfo = { name: string; minutes: number; base: string; distance: string; tone: string };
const mainRoute: RouteInfo = { name: "via Elbchaussee", minutes: 30, base: "24 min without traffic", distance: "14 km", tone: "text-[#7ed321]" };
const otherRoutes: RouteInfo[] = [
  { name: "via B431", minutes: 42, base: "26 min without traffic", distance: "14 km", tone: "text-[#f5a623]" },
  { name: "via Stresemannstraße", minutes: 43, base: "28 min without traffic", distance: "15 km", tone: "text-[#f0504f]" },
];

function RouteRow({ route }: { route: RouteInfo }) {
  return (
    <div className="flex items-start pr-12 pl-[30px]">
      <CarIcon className="shrink-0 text-[#8e87e8]" />
      <div className="ml-[46px] flex-1 pt-2">
        <h2 className="text-[33px] leading-[38px] font-light text-[#4a4a4a]">{route.name}</h2>
        <p className="mt-2 text-[22px] leading-7 font-light text-[#9b9b9b]">{route.base}</p>
      </div>
      <div className="pt-2 text-right">
        <p className={`${route.tone} text-[33px] leading-[38px] font-medium`}>
          {route.minutes} <span className="text-[26px] leading-none font-light">min</span>
        </p>
        <p className="mt-2 text-[22px] leading-7 font-light text-[#9b9b9b]">{route.distance}</p>
      </div>
    </div>
  );
}

function Step({ title, detail, icon }: { title: string; detail: string; icon?: ReactNode }) {
  return (
    <div className="flex">
      {icon && <div className="w-[76px] shrink-0 pt-[6px] pl-[7px]">{icon}</div>}
      <div>
        <h4 className="text-[22px] leading-7 text-[#4a4a4a]">{title}</h4>
        <p className="mt-1 text-[18px] leading-[26px] font-light text-[#9b9b9b]">{detail}</p>
      </div>
    </div>
  );
}

function Directions() {
  return (
    <section className="bg-[#fafafa] pt-[35px] pb-[27px] pl-[52px] text-[#4a4a4a]">
      <h3 className="text-[25px] leading-8 font-medium">My Location</h3>
      <div className="mt-[26px]">
        <Step
          title="Continue to Hasenhöhe"
          detail="2 min (700 m)"
          icon={
            <svg viewBox="0 0 32 44" className="h-11 w-8 fill-none stroke-[#8e87e8]" strokeWidth="2">
              <path d="M16 44V2M1 17L16 2L31 17" />
            </svg>
          }
        />
      </div>
      <div className="mt-5 ml-[136px] flex flex-col gap-5">
        <Step title="Continue to Hasenhöhe" detail="98 m" />
        <Step title="Turn right onto Hasenhöhe" detail="600 m" />
      </div>
      <hr className="mt-[18px] mb-6 ml-[73px] border-t-2 border-[#e6e6e6]" />
      <Step
        title="Take Elbchaussee to Jungfernstieg"
        detail="2 min (700 m)"
        icon={
          <svg viewBox="0 0 34 46" className="h-[46px] w-[34px] fill-none stroke-[#8e87e8]" strokeWidth="2">
            <path d="M1 46V16H32M16 1L32 16L16 31" />
          </svg>
        }
      />
      <h3 className="mt-[38px] text-[25px] leading-8 font-medium">Apple Store</h3>
      <p className="mt-2 text-[18px] leading-[26px] font-light text-[#9b9b9b]">Jungfernstieg 12, 20354 Hamburg</p>
    </section>
  );
}

/* ---------- Travel modes ---------- */

function ModeBar() {
  const [mode, setMode] = useState("car");
  const modes = [
    { id: "walk", label: "Walk", icon: <MdDirectionsWalk size={42} />, slot: "w-[42px] mr-7" },
    { id: "bike", label: "Bike", icon: <MdDirectionsBike size={42} />, slot: "w-[42px] mr-[22px]" },
    { id: "car", label: "Car", icon: <CarIcon />, slot: "w-[88px] mr-4" },
    { id: "train", label: "Train", icon: <TrainIcon />, slot: "w-12" },
  ];
  return (
    <div role="group" aria-label="Travel mode" className="flex h-[88px] items-center rounded-full bg-[#8e87e8] pr-[26px] pl-8">
      {modes.map((m) => (
        <button
          key={m.id}
          type="button"
          aria-label={m.label}
          aria-pressed={mode === m.id}
          onClick={() => setMode(m.id)}
          className={`flex h-[88px] shrink-0 items-center justify-center ${m.slot} ${
            mode === m.id ? "rounded-full bg-white text-[#8e87e8] shadow-[0_3px_8px_rgba(60,50,130,0.4)]" : "text-white/70"
          }`}
        >
          {m.icon}
        </button>
      ))}
    </div>
  );
}

export default function App() {
  return (
    <div className="min-h-screen bg-[radial-gradient(circle_at_100%_48%,rgba(125,117,205,0.5),transparent_35%),radial-gradient(circle_at_75%_100%,rgba(120,92,155,0.45),transparent_35%),linear-gradient(180deg,#6466b0_0%,#6968b1_18%,#7367b0_38%,#7160a3_58%,#674f8d_78%,#5f4b84_100%)] px-[101px] py-[75px] font-[Inter,sans-serif]">
      <main className="relative shadow-[0_4px_18px_rgba(30,15,70,0.45)]">
        <TripHeader />
        <div className="grid grid-cols-[754fr_846fr] bg-white">
          <div className="flex flex-col border-r-2 border-[#e4e3e6]">
            <div className="pt-[38px] pb-[30px]">
              <RouteRow route={mainRoute} />
            </div>
            <Directions />
            <ul className="mt-[2px]">
              {otherRoutes.map((route) => (
                <li key={route.name} className="border-t-2 border-[#e6e6e6] pt-7 pb-9 last:pb-[38px]">
                  <RouteRow route={route} />
                </li>
              ))}
            </ul>
          </div>
          <div className="relative min-w-0">
            <div className="absolute inset-0 border-t-2 border-[#d9d6d6]">
              <RouteMap />
            </div>
          </div>
        </div>
        <div className="absolute top-[174px] right-[42px] flex items-center gap-[120px]">
          <ModeBar />
          <button
            type="button"
            aria-label="Route options"
            className="flex size-[88px] items-center justify-center rounded-full bg-[#8e87e8] text-white shadow-[0_3px_8px_rgba(60,50,130,0.4)]"
          >
            <MdTune size={43} />
          </button>
        </div>
      </main>
    </div>
  );
}
